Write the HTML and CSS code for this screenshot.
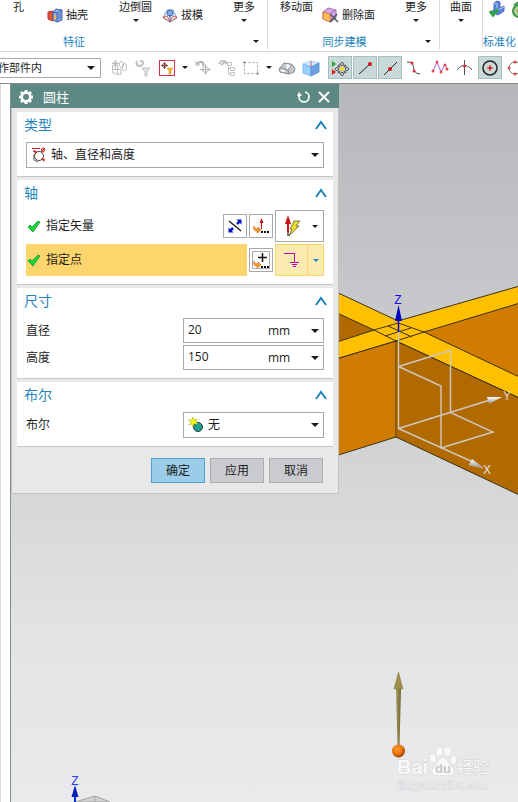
FILE: index.html
```html
<!DOCTYPE html>
<html lang="zh-CN">
<head>
<meta charset="utf-8">
<title>圆柱</title>
<link rel="stylesheet" href="styles.css">
</head>
<body>
<header class="ribbon">
  <section class="group group-feature">
    <div class="tools">
      <button class="tool">孔</button>
      <button class="tool tool-row"><svg width="16" height="16" viewBox="0 0 16 16"><path d="M1 5l5-1v10l-5-2z" fill="#e8543a" stroke="#a33a2a"/><path d="M6 5l3-3 6 1v10l-5 2-4-2z" fill="#8fb0ea" stroke="#3d5ea8"/><path d="M6 5l4 1v9M10 6l5-3" fill="none" stroke="#3d5ea8"/><path d="M7 8l2 1v4l-2-1z" fill="#f6b73c"/><path d="M11 7l3-2v7l-3 1z" fill="#6c8fd4"/></svg>抽壳</button>
      <button class="tool tool-drop">边倒圆<i class="caret"></i></button>
      <button class="tool tool-row"><svg width="16" height="16" viewBox="0 0 16 16"><path d="M5 3h6l4 8-7 4-7-4z" fill="#e4edfb" stroke="#7f9fd8"/><path d="M1 10l4-1 3 6zM15 10l-4-1-3 6z" fill="#fff" stroke="#d8644f"/><circle cx="8" cy="6" r="3" fill="#88abe4" stroke="#4169b8"/><path d="M8 8v7" stroke="#4169b8"/></svg>拔模</button>
      <button class="tool tool-drop">更多<i class="caret"></i></button>
    </div>
    <footer class="group-name feature-name"><span>特征</span><button class="launcher" aria-label="特征选项"><i class="caret"></i></button></footer>
  </section>
  <section class="group group-sync">
    <div class="tools">
      <button class="tool">移动面</button>
      <button class="tool tool-row"><svg width="17" height="16" viewBox="0 0 17 16"><path d="M1 5l5-4 8 2v8l-5 4-8-3z" fill="#d3a6e4" stroke="#a273bd"/><path d="M1 5l7 2v8l-7-3z" fill="#ffbd54" stroke="#e57a48"/><path d="M8 7l6-4" stroke="#a273bd"/><path d="M8 7l8 8M15 7l-7 8" stroke="#555" stroke-width="1.500"/></svg>删除面</button>
      <button class="tool tool-drop">更多<i class="caret"></i></button>
    </div>
    <footer class="group-name sync-name"><span>同步建模</span><button class="launcher" aria-label="同步建模选项"><i class="caret"></i></button></footer>
  </section>
  <section class="group group-surface">
    <div class="tools">
      <button class="tool tool-drop">曲面<i class="caret"></i></button>
    </div>
  </section>
  <section class="group group-standard">
    <div class="tools tools-icons">
      <button class="tool" aria-label="检查"><svg width="16" height="18" viewBox="0 0 16 18"><path d="M5 3l3-2 3 1v6l4-2v5l-6 4-6-3 2-3z" fill="#5a80d8" stroke="#4a6fc8"/><path d="M5 3l3 1v7M9 10l6-3" fill="none" stroke="#b3c8f6"/><path d="M1 11l3 4 5-6" fill="none" stroke="#2fa34a" stroke-width="3"/></svg></button>
      <button class="tool" aria-label="标准"><svg width="16" height="18" viewBox="0 0 16 18"><circle cx="8" cy="11" r="6" fill="#a8d49a" stroke="#3f9145" stroke-width="2"/><path d="M3 5l5-3 5 3" fill="none" stroke="#3f9145" stroke-width="2"/><circle cx="8" cy="11" r="2" fill="#e07b30"/></svg></button>
    </div>
    <footer class="group-name standard-name"><span>标准化</span></footer>
  </section>
</header>

<nav class="selection-bar" aria-label="选择条">
  <div class="scope"><select aria-label="选择范围"><option>作部件内</option></select><i class="caret"></i></div>
  <div class="picks">
    <button class="pick" aria-label="装配过滤"><svg width="18" height="18" viewBox="0 0 18 18" fill="none" stroke="#bebebe"><path d="M2.500 6.500h5v9l-5-2zM3 10.500h8v5H8M5.500 1v9M2 4.500h7"/><circle cx="5.500" cy="4.500" r="2"/><rect x="9.500" y="2.500" width="4" height="6" rx="2"/><rect x="12.500" y="4.500" width="4" height="7" rx="2"/></svg></button>
    <button class="pick" aria-label="重置过滤"><svg width="18" height="18" viewBox="0 0 18 18"><path d="M3 2c-2 5 3 6 5 4M6 2c4 0 4 2 2 4" fill="none" stroke="#c2c2c2" stroke-width="2"/><path d="M8 9h8l-3 4v4h-2v-4z" fill="#e2e2e2" stroke="#c6c6c6"/></svg></button>
    <button class="pick" aria-label="选择过滤"><svg width="16" height="16" viewBox="0 0 16 16"><rect width="16" height="16" fill="#cf3545"/><rect x="1" y="1" width="14" height="14" fill="#fff"/><path d="M5.500 2v7M2 5.500h7" stroke="#a04048"/><circle cx="5.500" cy="5.500" r="2" fill="none" stroke="#70484c"/><path d="M8 8h6l-2 3v3h-2v-3z" fill="#ffb431" stroke="#d8952c" stroke-width=".5"/></svg></button>
    <button class="drop" aria-label="过滤选项"><i class="caret"></i></button>
    <button class="pick" aria-label="旋转点"><svg width="18" height="18" viewBox="0 0 18 18" fill="none" stroke="#b0b0b0"><path d="M3 5c4-4 7-2 6 2" stroke-width="2"/><path d="M2 2v4h4M11.500 5v11M6 10.500h11"/><circle cx="11.500" cy="10.500" r="3"/></svg></button>
    <button class="pick" aria-label="树选择"><svg width="18" height="18" viewBox="0 0 18 18" fill="none" stroke="#c2c2c2"><path d="M1 5c2-4 5-4 8-1M3 6l4-3 2 2" stroke-width="2"/><path d="M9.500 3.500h4v3h-4zM12.500 8.500h4v3h-4zM12.500 13.500h4v3h-4zM10.500 7v8h2M10.500 9.500h2"/></svg></button>
    <button class="pick" aria-label="矩形选择"><svg width="18" height="18" viewBox="0 0 18 18" fill="none" stroke="#999"><rect x="2.500" y="3.500" width="13" height="11" stroke-dasharray="2 2"/><path d="M1 3.500h3M2.500 2v3M14 14.500h3M15.500 13v3"/></svg></button>
    <button class="drop" aria-label="矩形选项"><i class="caret"></i></button>
    <button class="pick" aria-label="着色"><svg width="18" height="18" viewBox="0 0 18 18"><path d="M1 10l5-6 7 1 4 4-1 4-5 2-9-2z" fill="#c4c7cc" stroke="#858a94"/><path d="M2 9l8 2 1 4M10 11l4-6" fill="none" stroke="#858a94"/><path d="M3 11l3 1v1M8 6l3 1-2 3" fill="none" stroke="#fff" stroke-width="2"/></svg></button>
    <button class="pick" aria-label="实体"><svg width="18" height="18" viewBox="0 0 18 18"><path d="M1 5l8-3 8 2-8 4z" fill="#d3eaff" stroke="#a5d0f5"/><path d="M1 5l8 3v9l-8-3z" fill="#9bd0fc" stroke="#7db8f0"/><path d="M9 8l8-4v9l-8 4z" fill="#6ba0e2" stroke="#5c95da"/><path d="M9 2v6" stroke="#e05065"/></svg></button>
  </div>
  <div class="snaps">
    <button class="snap on" aria-label="启用捕捉点"><svg width="18" height="18" viewBox="0 0 18 18"><path d="M1 2l4 3-4 3z" fill="#18a32c"/><path d="M1 10l4 3-4 3z" fill="#e02020"/><g fill="#fff" stroke="#222" stroke-width=".8"><circle cx="11" cy="5" r="1.500"/><circle cx="11" cy="15" r="1.500"/><circle cx="6" cy="10" r="1.500"/><circle cx="16" cy="10" r="1.500"/><circle cx="8" cy="7" r="1"/><circle cx="14" cy="7" r="1"/><circle cx="8" cy="13" r="1"/><circle cx="14" cy="13" r="1"/></g><circle cx="11" cy="10" r="2" fill="#ffd400"/></svg></button>
    <button class="snap on" aria-label="端点"><svg width="18" height="18" viewBox="0 0 18 18"><path d="M3 15L14 5" stroke="#222"/><circle cx="14" cy="5" r="2" fill="#d01616"/></svg></button>
    <button class="snap on" aria-label="中点"><svg width="18" height="18" viewBox="0 0 18 18"><path d="M3 16L16 3" stroke="#222"/><circle cx="9" cy="10" r="2" fill="#d01616"/></svg></button>
    <button class="snap" aria-label="控制点"><svg width="18" height="18" viewBox="0 0 18 18"><path d="M1 3c11-1 2 11 13 12" fill="none" stroke="#444"/><circle cx="6" cy="4" r="1.500" fill="#d33"/><circle cx="8" cy="12" r="1.500" fill="#d33"/></svg></button>
    <button class="snap" aria-label="极点"><svg width="18" height="18" viewBox="0 0 18 18"><path d="M2 12L6 3l4 10 4-8 2 5" fill="none" stroke="#b060d8"/><g fill="#e04a50"><circle cx="2" cy="12" r="1.500"/><circle cx="6" cy="3" r="1.500"/><circle cx="10" cy="13" r="1.500"/><circle cx="14" cy="6" r="1.500"/><circle cx="16" cy="10" r="1.500"/></g></svg></button>
    <button class="snap" aria-label="交点"><svg width="18" height="18" viewBox="0 0 18 18"><path d="M8.500 1v15M1 11c4-6 11-6 15 0" fill="none" stroke="#555"/><circle cx="8.500" cy="7" r="1.500" fill="#d22"/></svg></button>
    <button class="snap on" aria-label="圆心"><svg width="18" height="18" viewBox="0 0 18 18"><circle cx="9" cy="9" r="7" fill="none" stroke="#222" stroke-width="1.500"/><path d="M9 6v6M6 9h6" stroke="#d22"/><circle cx="9" cy="9" r="1.500" fill="#d01616"/></svg></button>
    <button class="snap" aria-label="象限点"><svg width="18" height="18" viewBox="0 0 18 18"><circle cx="9" cy="9" r="6" fill="none" stroke="#777"/><g fill="#e34848"><circle cx="9" cy="3" r="1.500"/><circle cx="3" cy="9" r="1.500"/><circle cx="9" cy="15" r="1.500"/><circle cx="15" cy="9" r="1.500"/></g></svg></button>
  </div>
</nav>

<main class="workspace">
  <div class="gutter"></div>
  <div class="viewport">
    <svg class="scene" viewBox="11 84 507 718" preserveAspectRatio="xMinYMin slice">
      <defs>
        <radialGradient id="ball" cx=".4" cy=".35" r=".7"><stop offset="0" stop-color="#ff9a32"/><stop offset=".5" stop-color="#f07810"/><stop offset="1" stop-color="#8a3c00"/></radialGradient>
        <linearGradient id="shaft"><stop offset="0" stop-color="#a39a62"/><stop offset=".5" stop-color="#8c8145"/><stop offset="1" stop-color="#6d6535"/></linearGradient>
        <linearGradient id="cone" x2="0" y2="1"><stop offset="0" stop-color="#fff"/><stop offset="1" stop-color="#8f8f8f"/></linearGradient>
      </defs>
      <g stroke="#3c3018" stroke-width="1">
        <path d="M300 275L398 321L530 283V403L396 341L300 370z" fill="#ffc000"/>
        <path d="M300 296L374 330L300 354z" fill="#b06a00"/>
        <path d="M424 332L530 300V382z" fill="#d07c00"/>
        <path d="M300 370L396 341V437L300 467z" fill="#d07c00"/>
        <path d="M396 341L530 403V500L396 437z" fill="#b06a00"/>
        <path d="M374 330L398 323L424 332L396 341zM388 326L412 337M385 336L411 328" fill="none"/>
      </g>
      <path d="M396 342V436" stroke="#b87108"/>
      <g fill="none" stroke="#cfc8c0" stroke-width="1.400">
        <path d="M398.500 331V428.500L490 400M398.500 428.500L473 462M398.500 366.500L450.500 350.500V412.500L493 432L441 448V386L398.500 366.500"/>
      </g>
      <path d="M487 397L502 397L489 404z" fill="url(#cone)"/>
      <path d="M472 459L483 468L469 465z" fill="url(#cone)" stroke="#ccc" stroke-width=".5"/>
      <path d="M398.500 320V332" stroke="#0000d8" stroke-width="1.500"/>
      <path d="M398.500 305L402 321H395z" fill="#0000c0"/>
      <g class="axis">
        <text x="398" y="304" fill="#1010e8">Z</text>
        <text x="507" y="400" fill="#ddd5cc">Y</text>
        <text x="487" y="474" fill="#e6e6e6">X</text>
        <text x="75" y="785" fill="#2040f0">Z</text>
      </g>
      <path d="M75 802L95 796L110 802z" fill="#d0d1d2" stroke="#a4a4a4"/>
      <path d="M95 796V802" stroke="#a4a4a4"/>
      <path d="M75 785L78.500 797H71.500z" fill="#0020b8"/><path d="M75 796V804" stroke="#0030d0" stroke-width="2"/>
      <path d="M396 689H401L399.500 746H397.500z" fill="url(#shaft)"/>
      <path d="M398.500 672L403 689H394z" fill="#9c8d48" stroke="#897d3c" stroke-width=".5"/>
      <circle cx="398.500" cy="751" r="6.500" fill="url(#ball)"/>
      <g class="watermark">
        <text class="mark-name" x="397" y="774">Bai</text>
        <g class="paw"><ellipse cx="433" cy="758" rx="3" ry="4.500"/><ellipse cx="439.500" cy="751.500" rx="3.500" ry="4.500"/><ellipse cx="447.500" cy="751.500" rx="3.500" ry="4.500"/><ellipse cx="453.500" cy="760" rx="3" ry="4.500"/><path d="M443 758c4 0 5 5 8 8 6 6 2 11-8 9-10 2-14-3-8-9 3-3 4-8 8-8z"/></g>
        <text class="mark-du" x="443" y="773">du</text>
        <text class="mark-cn" x="457" y="773">经验</text>
        <text class="mark-url" x="398" y="789">jingyan.baidu.com</text>
      </g>
    </svg>

    <form class="dialog" aria-label="圆柱">
      <header class="titlebar">
        <svg width="16" height="16" viewBox="0 0 16 16"><g stroke="#fff" stroke-width="3"><path d="M8 1v14M1 8h14M3 3l10 10M13 3L3 13"/></g><circle cx="8" cy="8" r="5.500" fill="#fff"/><circle cx="8" cy="8" r="3" fill="#5c8982"/></svg>
        <h1>圆柱</h1>
        <button type="button" class="title-button" aria-label="重置"><svg width="14" height="14" viewBox="0 0 14 14"><path d="M8 2a5 5 0 1 1-6 5V4" fill="none" stroke="#fff" stroke-width="1.700"/><path d="M0 6l2-4 3 4z" fill="#fff"/></svg></button>
        <button type="button" class="title-button" aria-label="关闭"><svg width="14" height="14" viewBox="0 0 14 14"><path d="M2 2l10 10M12 2L2 12" stroke="#fff" stroke-width="2"/></svg></button>
      </header>
      <div class="panels">
        <section class="panel">
          <header class="panel-head"><h2>类型</h2><button type="button" aria-label="折叠类型"><svg width="12" height="10" viewBox="0 0 12 10"><path d="M1 9l5-7 5 7" /></svg></button></header>
          <div class="combo">
            <svg width="16" height="16" viewBox="0 0 16 16" fill="none"><circle cx="8" cy="9" r="4.500" stroke="#444"/><path d="M3 3l2 3M3 7v6l4 2" stroke="#555"/><path d="M1 1.500h8M2 4l3 1" stroke="#d02020"/><ellipse cx="12" cy="3" rx="1.500" ry="2" stroke="#d02020"/><path d="M10 5l4-4" stroke="#d02020"/><path d="M2 4l4 0-1 3zM10 11l4 1-1 3z" fill="#d02020"/></svg>
            <select aria-label="类型"><option>轴、直径和高度</option></select><i class="caret"></i>
          </div>
        </section>
        <section class="panel">
          <header class="panel-head"><h2>轴</h2><button type="button" aria-label="折叠轴"><svg width="12" height="10" viewBox="0 0 12 10"><path d="M1 9l5-7 5 7" /></svg></button></header>
          <div class="step">
            <div class="step-name"><svg class="check" width="14" height="14" viewBox="0 0 14 14"><path d="M1 8l2-2 2 2 6-6 2 1-7 10z" fill="#18d838" stroke="#15962b" stroke-width=".8"/></svg>指定矢量</div>
            <button type="button" class="square" aria-label="反向"><svg width="18" height="18" viewBox="0 0 18 18"><path d="M3 4l12 10" stroke="#111" stroke-width="1.200"/><path d="M4 14L7 11M11 7L14 4" stroke="#0018c8" stroke-width="2.500"/><path d="M15.500 2.500v5l-5-5zM2.500 15.500v-5l5 5z" fill="#0018c8"/></svg></button>
            <button type="button" class="square" aria-label="矢量对话框"><svg width="18" height="18" viewBox="0 0 18 18"><path d="M9.500 4v8" stroke="#c01515"/><path d="M9.500 1l2 5h-4z" fill="#c01515"/><path d="M2 9c0 2 2 3 4 3v-2l3 3-4 3v-2c-3 0-4-2-3-5z" fill="#ff9c20" stroke="#d85a18" stroke-width=".6"/><path d="M9 15h8" stroke="#111" stroke-width="2" stroke-dasharray="2 1"/></svg></button>
            <div class="split"><button type="button" class="split-main" aria-label="自动判断"><svg width="20" height="24" viewBox="0 0 20 24"><path d="M6 14v8" stroke="#777" stroke-width="2"/><path d="M6 1l3 9H3zM5 9h2v9H5z" fill="#c91414"/><path d="M12 7h6l-4 5h3L7 22l3-7H8z" fill="#eadb35" stroke="#55501c" stroke-width=".7"/></svg></button><button type="button" class="split-drop" aria-label="矢量选项"><i class="caret"></i></button></div>
          </div>
          <div class="step active">
            <div class="step-name"><svg class="check" width="14" height="14" viewBox="0 0 14 14"><path d="M1 8l2-2 2 2 6-6 2 1-7 10z" fill="#18d838" stroke="#15962b" stroke-width=".8"/></svg>指定点</div>
            <button type="button" class="square" aria-label="点对话框"><svg width="20" height="20" viewBox="0 0 20 20"><rect x="1.500" y="1.500" width="17" height="17" fill="none" stroke="#555" stroke-dasharray="1 1"/><path d="M11.500 3v9M7 7.500h9" stroke="#111" stroke-width="1.500"/><path d="M3 11c0 2 2 3 4 3v-2l3 3-4 3v-2c-3 0-4-2-3-5z" fill="#ff9c20" stroke="#d85a18" stroke-width=".6"/><path d="M10 17h8" stroke="#111" stroke-width="2" stroke-dasharray="2 1"/></svg></button>
            <div class="split"><button type="button" class="split-main" aria-label="现有点"><svg width="18" height="20" viewBox="0 0 18 20" fill="none" stroke="#c000b0"><path d="M1 3.500h10.500v9M7 12.500h9M9 14.500h5M10 16.500h3"/></svg></button><button type="button" class="split-drop" aria-label="点选项"><i class="caret"></i></button></div>
          </div>
        </section>
        <section class="panel">
          <header class="panel-head"><h2>尺寸</h2><button type="button" aria-label="折叠尺寸"><svg width="12" height="10" viewBox="0 0 12 10"><path d="M1 9l5-7 5 7" /></svg></button></header>
          <div class="field"><label for="diameter">直径</label><div class="combo amount"><input id="diameter" type="text" value="20"><select aria-label="直径单位"><option>mm</option></select><i class="caret"></i></div></div>
          <div class="field"><label for="height">高度</label><div class="combo amount"><input id="height" type="text" value="150"><select aria-label="高度单位"><option>mm</option></select><i class="caret"></i></div></div>
        </section>
        <section class="panel">
          <header class="panel-head"><h2>布尔</h2><button type="button" aria-label="折叠布尔"><svg width="12" height="10" viewBox="0 0 12 10"><path d="M1 9l5-7 5 7" /></svg></button></header>
          <div class="field"><label for="boolean">布尔</label>
            <div class="combo"><svg width="16" height="16" viewBox="0 0 16 16"><circle cx="10" cy="10" r="4.500" fill="#20a090" stroke="#163c38"/><path d="M5 0l1 3 3-1-1 3 2 2-4 0-1 3-1-3-3 1 2-3-3-2 3 0z" fill="#f4f020" stroke="#8c9c18" stroke-width=".4"/></svg><select id="boolean"><option>无</option></select><i class="caret"></i></div>
          </div>
        </section>
      </div>
      <footer class="actions">
        <button type="button" class="action primary">确定</button>
        <button type="button" class="action">应用</button>
        <button type="button" class="action">取消</button>
      </footer>
    </form>
  </div>
</main>
</body>
</html>
```
FILE: styles.css
```css
* { box-sizing: border-box; }

body {
  display: flex;
  flex-direction: column;
  min-height: 100vh;
  margin: 0;
  overflow-x: hidden;
  background: #fff;
  color: #1c1c1c;
  font: 12px/16px "Open Sans", "Noto Sans CJK SC", sans-serif;
}

button, input, select {
  margin: 0;
  padding: 0;
  border: 0;
  background: none;
  color: inherit;
  font: inherit;
}

select { appearance: none; min-width: 0; outline: 0; }
svg { display: block; flex: none; }
h1, h2 { margin: 0; font-weight: 400; }

.caret {
  display: block;
  flex: none;
  width: 0;
  height: 0;
  border: 4px solid transparent;
  border-top-color: currentColor;
  border-bottom: 0;
}

/* Ribbon */
.ribbon {
  display: flex;
  height: 52px;
  overflow: hidden;
  border-bottom: 1px solid #d8d8d8;
  font-size: 11px;
  line-height: 14px;
  white-space: nowrap;
}

.group {
  display: flex;
  flex: none;
  flex-direction: column;
  justify-content: space-between;
  height: 49px;
}

.group + .group { border-left: 1px solid #d8d8d8; }
.group-feature { width: 267px; }
.group-sync { width: 172px; }
.group-surface { width: 43px; }
.group-standard { flex: 1 0 36px; }

.tools {
  display: grid;
  justify-items: start;
  align-items: start;
  height: 32px;
}

.group-feature .tools { grid-template-columns: 34px 72px 43px 71px 1fr; padding-left: 13px; }
.group-sync .tools { grid-template-columns: 42px 83px 1fr; padding-left: 12px; }
.group-surface .tools { padding-left: 10px; }
.group-standard .tools { grid-template-columns: 22px 22px; padding-left: 6px; }

.tool { height: 14px; }
.tool-row { display: flex; align-items: center; gap: 3px; height: 29px; }
.tool-drop { display: flex; flex-direction: column; align-items: center; gap: 5px; height: 24px; }
.tool .caret, .launcher .caret, .drop .caret, .split .caret { border-width: 3px 3px 0; }

.group-name {
  display: flex;
  position: relative;
  justify-content: center;
  height: 14px;
  color: #2484bd;
}

.feature-name { padding-right: 119px; }
.sync-name { padding-right: 18px; }
.standard-name { justify-content: flex-start; }

.launcher {
  position: absolute;
  top: 5px;
  right: 8px;
  color: #1c1c1c;
}

/* Selection bar */
.selection-bar {
  display: flex;
  align-items: center;
  height: 32px;
  overflow: hidden;
  border-bottom: 1px solid #87898b;
}

.scope {
  display: flex;
  flex: none;
  align-items: center;
  width: 109px;
  height: 20px;
  margin-left: -8px;
  padding: 0 5px;
  border: 1px solid #aaa;
  font-size: 11px;
}

.scope select { flex: 1; }
.picks { display: flex; flex: none; align-items: center; margin-left: 6px; }
.snaps { display: flex; flex: none; gap: 1px; margin-left: 5px; }

.pick, .snap, .drop {
  display: grid;
  flex: none;
  place-items: center;
  width: 24px;
  height: 23px;
}

.drop { width: 12px; }
.snap.on { border: 1px solid #a3c1bd; background: #c9d9d7; }

/* Work area */
.workspace { display: flex; flex: 1; }
.gutter { flex: none; width: 10px; border-left: 1px solid #d9d9d9; }

.viewport {
  position: relative;
  flex: 1;
  min-height: 600px;
  overflow: hidden;
  border-left: 1px solid #82908f;
  background: linear-gradient(#b6b7ba, #d5d6d8 56%, #e3e4e6 78%, #e9eaec);
}

.scene { position: absolute; inset: 0; width: 100%; height: 100%; }
.axis { font: 12px "Liberation Sans", sans-serif; text-anchor: middle; }
.watermark { fill: #f8f8f9; stroke: #d2d3d5; stroke-width: 1px; paint-order: stroke; }
.mark-name { font: bold 20px "Liberation Sans", sans-serif; }
.mark-du { fill: #c6c7c9; stroke: none; font: bold 13px "Liberation Sans", sans-serif; text-anchor: middle; }
.mark-cn { font: 16px "Noto Sans CJK SC", sans-serif; }
.mark-url { fill: #f1f2f3; font: 11px "Liberation Sans", sans-serif; }

/* Floating dialog */
.dialog {
  position: absolute;
  top: 0;
  left: 0;
  width: 328px;
  background: #e8e8e8;
}

.titlebar {
  display: flex;
  align-items: center;
  gap: 6px;
  height: 24px;
  padding: 2px 8px 0 7px;
  background: #5c8982;
  color: #fff;
}

.titlebar h1 { flex: 1; padding-left: 3px; font-size: 13px; line-height: 20px; }

.panels {
  display: flex;
  flex-direction: column;
  gap: 3px;
  padding: 4px 5px 0;
  border: solid #bfc1c2;
  border-width: 0 1px;
}

.panel {
  display: flex;
  flex-direction: column;
  gap: 2px;
  padding: 0 9px 8px;
  border-bottom: 1px solid #c6c6c6;
  background: #fff;
}

.panel-head {
  display: flex;
  align-items: center;
  justify-content: space-between;
  height: 28px;
  margin: 0 -3px 0 -2px;
  padding-bottom: 2px;
  color: #2484bd;
}

.panel-head h2 { font-size: 14px; line-height: 20px; }
.panel-head path { fill: none; stroke: #2484bd; stroke-width: 2; }

.combo {
  display: flex;
  align-items: center;
  height: 26px;
  padding: 0 4px;
  border: 1px solid #a9a9a9;
  background: #fff;
}

.combo > svg + select { flex: 1; padding-left: 4px; }

.step { display: flex; align-items: center; gap: 2px; height: 32px; }

.step-name {
  display: flex;
  flex: 1;
  align-self: stretch;
  align-items: center;
  gap: 5px;
  padding-left: 1px;
}

.active .step-name { background: #fcd66c; }

.square {
  display: grid;
  place-items: center;
  width: 24px;
  height: 24px;
  border: 1px solid #a9a9a9;
  background: #fff;
}

.split { display: flex; width: 49px; height: 32px; border: 1px solid #a9a9a9; }
.split button { display: grid; place-items: center; }
.split-main { flex: 1; }
.split-drop { width: 16px; }
.active .split { border-color: #fcd66c; background: #faeab0; color: #2484bd; }
.active .split-drop { border-left: 1px solid #fcd66c; }

.field { display: flex; align-items: center; justify-content: space-between; }
.field .combo { width: 141px; }
.field .amount { height: 25px; }
.amount input { flex: 1; min-width: 0; padding-bottom: 2px; outline: 0; }
.amount select { width: 43px; }

.actions {
  display: flex;
  justify-content: flex-end;
  gap: 5px;
  padding: 11px 15px 10px;
  border: solid #bfc1c2;
  border-width: 0 1px 1px;
}

.action {
  width: 54px;
  height: 25px;
  border: 1px solid #abacad;
  background: #cacbcf;
}

.primary { border-color: #4ba3d1; background: #9bcde8; }
```
